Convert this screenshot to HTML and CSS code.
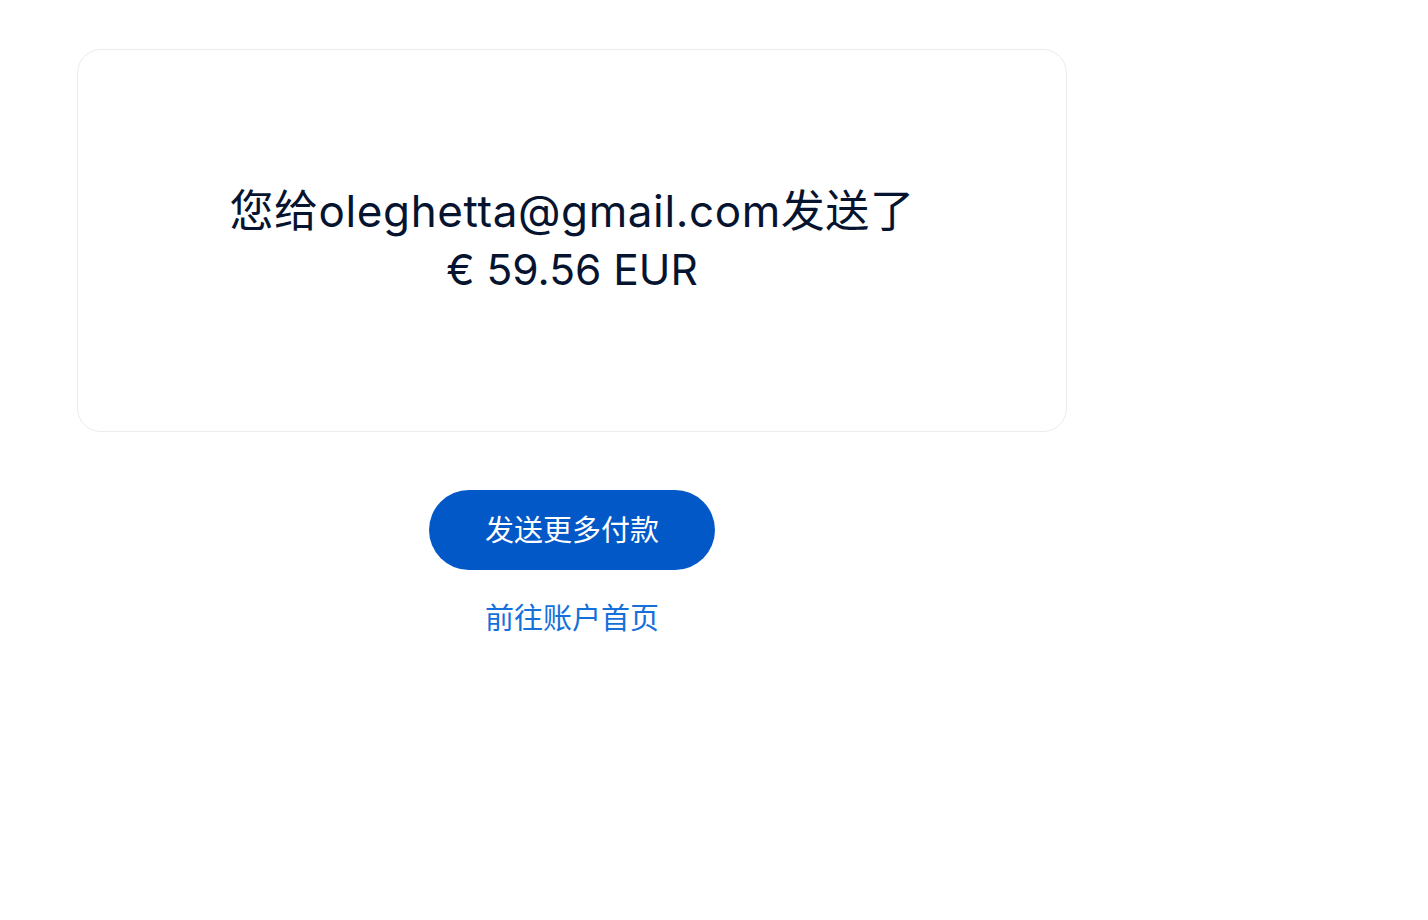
FILE: index.html
```html
<!DOCTYPE html>
<html lang="zh-CN">
<head>
    <meta charset="UTF-8">
    <meta name="viewport" content="width=device-width, initial-scale=1.0">
    <title>付款已发送</title>
    <link rel="stylesheet" href="styles.css">
</head>
<body>
    <div id="page">
        <div class="result-card">
            <p class="result-text">
                <span class="recipient">您给oleghetta@gmail.com发送了</span><br>
                <span class="amount">€ 59.56 EUR</span>
            </p>
        </div>

        <div class="actions">
            <button class="send-more-btn">发送更多付款</button>
            <a class="home-link" href="#">前往账户首页</a>
        </div>
    </div>
</body>
</html>
```

FILE: styles.css
```css
body {
    margin: 0;
    background-color: #ffffff;
    font-family: Inter, "Noto Sans CJK SC", sans-serif;
}

#page {
    width: 990px;
    padding: 49px 0 0 77px;
}

.result-card {
    box-sizing: border-box;
    height: 383px;
    border: 1px solid #ececec;
    border-radius: 24px;
    display: flex;
    align-items: center; /* text sits in the middle of the card */
    justify-content: center;
}

.result-text {
    margin: 0;
    text-align: center;
    font-size: 44px;
    line-height: 58px;
    color: #061430;
}

.recipient {
    letter-spacing: 0.6px;
}

.amount {
    font-size: 42.5px;
}

.actions {
    display: flex;
    flex-direction: column;
    align-items: center;
    margin-top: 58px;
}

.send-more-btn {
    height: 80px;
    padding: 0 56px;
    border: none;
    border-radius: 40px;
    background-color: #0358c8;
    color: #ffffff;
    font-family: inherit;
    font-size: 29px;
    line-height: 1;
    cursor: pointer;
}

.home-link {
    margin-top: 27px;
    font-size: 29px;
    line-height: 44px;
    color: #1570d9;
    text-decoration: none;
}
```
